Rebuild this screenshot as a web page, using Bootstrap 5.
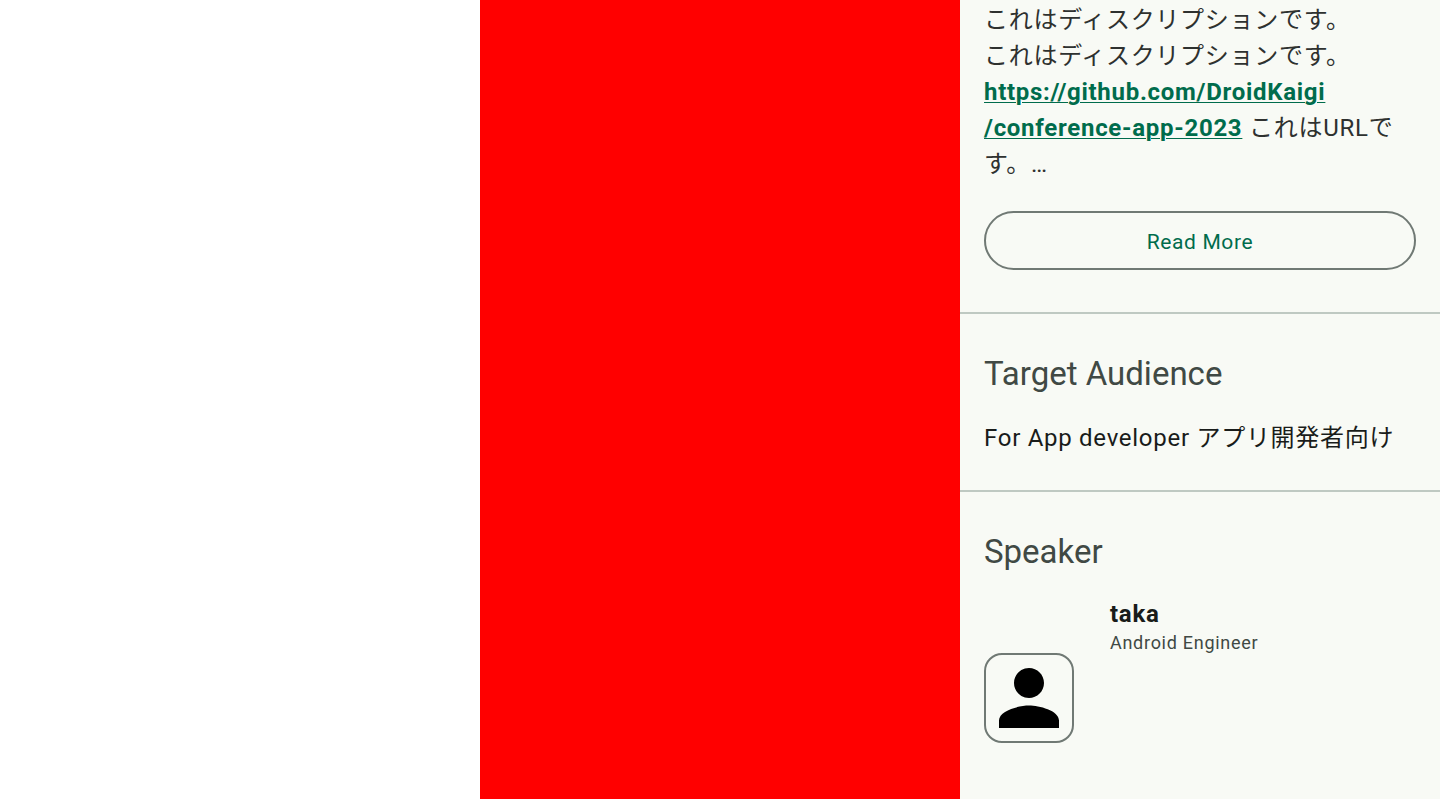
<!DOCTYPE html>
<html lang="ja">
<head>
<meta charset="utf-8">
<meta name="viewport" content="width=device-width, initial-scale=1">
<title>Session</title>
<link rel="stylesheet" href="https://cdn.jsdelivr.net/npm/bootstrap@5.3.0/dist/css/bootstrap.min.css">
<style>
body{font-family:Roboto,"Noto Sans CJK JP",sans-serif;background:#fff}
.pane-red{background:#f00}
.pane-detail{background:#f8faf5;color:#191c1a}
.intro{padding-top:2px;padding-bottom:42px}
.txt{font-size:24px;line-height:36px;letter-spacing:.03em}
.description{color:#2e312f;margin-bottom:29px}
.description a{color:#006c4c;text-underline-offset:2px;text-decoration-thickness:1px}
.btn-more,.btn-more:hover{height:59px;padding-top:10px;font-size:21px;letter-spacing:.03em;color:#006c4c;border:2px solid #707974}
.section{border-top:2px solid #bfc9c2;padding-top:39px;padding-bottom:34px}
.heading{font-size:33px;line-height:42px;margin-bottom:25px;color:#404944}
.speaker{gap:36px}
.avatar{width:90px;height:90px;border:2px solid #707974;border-radius:18px;margin-top:55px}
.speaker-name{font-size:24px;line-height:32px;letter-spacing:.03em}
.role{font-size:18px;line-height:26px;letter-spacing:.04em;color:#404944}
</style>
</head>
<body>
<main class="row g-0 min-vh-100">
<div class="col-4"></div>
<div class="col-4 pane-red"></div>
<article class="col-4 pane-detail">
<section class="intro px-4">
<p class="txt description">これはディスクリプションです。<br>これはディスクリプションです。<br><a class="fw-bold" href="https://github.com/DroidKaigi/conference-app-2023">https://github.com/DroidKaigi<br>/conference-app-2023</a> これはURLで<br>す。…</p>
<button type="button" class="btn btn-more rounded-pill w-100">Read More</button>
</section>
<section class="section px-4">
<h2 class="heading fw-normal">Target Audience</h2>
<p class="txt mb-0">For App developer アプリ開発者向け</p>
</section>
<section class="section px-4">
<h2 class="heading fw-normal">Speaker</h2>
<div class="speaker d-flex">
<div class="avatar d-flex align-items-center justify-content-center flex-shrink-0"><svg viewBox="4 4 16 16" width="60" height="60" aria-hidden="true"><path d="M12 12c2.21 0 4-1.79 4-4s-1.79-4-4-4-4 1.79-4 4 1.79 4 4 4zm0 2c-2.67 0-8 1.34-8 4v2h16v-2c0-2.66-5.33-4-8-4z"/></svg></div>
<div><div class="speaker-name fw-bold">taka</div><div class="role">Android Engineer</div></div>
</div>
</section>
</article>
</main>
<script src="https://cdn.jsdelivr.net/npm/bootstrap@5.3.0/dist/js/bootstrap.bundle.min.js"></script>
</body>
</html>
